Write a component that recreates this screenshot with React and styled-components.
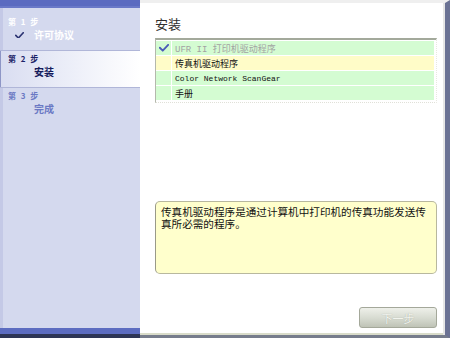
import React from "react";
import styled, { createGlobalStyle } from "styled-components";

const GlobalStyle = createGlobalStyle`
  html, body {
    margin: 0;
    padding: 0;
    background: #ffffff;
  }
  body {
    font-family: "Noto Sans CJK SC", "Liberation Sans", sans-serif;
  }
`;

const steps = [
  { label: "第 1 步", name: "许可协议", state: "done" },
  { label: "第 2 步", name: "安装", state: "active" },
  { label: "第 3 步", name: "完成", state: "todo" },
];

const items = [
  { text: "UFR II 打印机驱动程序", tone: "green", checked: true, disabled: true },
  { text: "传真机驱动程序", tone: "yellow" },
  { text: "Color Network ScanGear", tone: "green", latin: true },
  { text: "手册", tone: "green" },
];

const Check = ({ color, size = 9 }) => (
  <svg width={size} height={size * 0.75} viewBox="0 0 12 9">
    <path
      d="M1 4.5 L4.5 8 L11 1"
      fill="none"
      stroke={color}
      strokeWidth="2.2"
      strokeLinecap="round"
      strokeLinejoin="round"
    />
  </svg>
);

const App = () => {
  return (
    <>
      <GlobalStyle />
      <Frame>
        <Sidebar>
          <TopBand />
          <Steps>
            {steps.map((s) => (
              <Step key={s.label} $state={s.state}>
                <StepLabel $state={s.state}>{s.label}</StepLabel>
                <StepName $state={s.state}>
                  <CheckSlot>
                    {s.state === "done" && <Check color="#2b3372" size={9} />}
                  </CheckSlot>
                  {s.name}
                </StepName>
              </Step>
            ))}
          </Steps>
          <BottomBand />
        </Sidebar>

        <Main>
          <Title>安装</Title>
          <List>
            {items.map((it) => (
              <Row key={it.text} $tone={it.tone}>
                <IconCell>
                  {it.checked && <Check color="#4a5ab8" size={10} />}
                </IconCell>
                <TextCell $disabled={it.disabled} $latin={it.latin}>
                  {it.text}
                </TextCell>
              </Row>
            ))}
          </List>

          <Description>
            传真机驱动程序是通过计算机中打印机的传真功能发送传真所必需的程序。
          </Description>

          <Footer>
            <NextButton disabled>下一步</NextButton>
          </Footer>
        </Main>
      </Frame>
    </>
  );
};

const Frame = styled.div`
  display: flex;
  width: 450px;
  height: 338px;
  overflow: hidden;
`;

const Sidebar = styled.aside`
  width: 140px;
  display: flex;
  flex-direction: column;
  background: #d4d9ee;
`;

const TopBand = styled.div`
  height: 8px;
  background: #5b6bc0;
  box-shadow: inset 0 -2px 0 #6a79c8;
`;

const Steps = styled.div`
  flex: 1;
  padding-top: 6px;
  background: linear-gradient(to right, #c4c9e6 3px, #d4d9ee 3px);
`;

const Step = styled.div`
  height: 37px;
  padding: 3px 0 0 8px;
  box-sizing: border-box;
  border-bottom: 1px solid ${(p) => (p.$state === "todo" ? "transparent" : "#b0b6d8")};
  background: ${(p) =>
    p.$state === "active"
      ? "linear-gradient(to right, #d9ddf1 0%, #eef0f9 55%, #ffffff 100%)"
      : "transparent"};
  box-shadow: ${(p) => (p.$state === "active" ? "inset 1px 0 0 #8e96c6" : "none")};
`;

const StepLabel = styled.div`
  font-size: 8px;
  font-weight: 700;
  line-height: 10px;
  letter-spacing: 1.5px;
  color: ${(p) =>
    p.$state === "done" ? "#ffffff" : p.$state === "active" ? "#1c2468" : "#6b79c4"};
`;

const StepName = styled.div`
  display: flex;
  align-items: center;
  margin-top: 2px;
  font-size: 10px;
  font-weight: 700;
  line-height: 12px;
  color: ${(p) =>
    p.$state === "done" ? "#ffffff" : p.$state === "active" ? "#151c5c" : "#6b79c4"};
`;

const CheckSlot = styled.span`
  display: inline-flex;
  width: 26px;
  padding-left: 7px;
  box-sizing: border-box;
`;

const BottomBand = styled.div`
  height: 10px;
  background: linear-gradient(to bottom, #5c6cc0 0, #5c6cc0 6px, #2d3555 6px);
`;

const Main = styled.main`
  flex: 1;
  display: flex;
  flex-direction: column;
  padding: 13px 8px 0 15px;
  background: #ffffff;
  border-top: 3px solid #efefef;
  border-right: 5px solid #6b7294;
  border-bottom: 3px solid #767c8c;
  box-shadow: inset -2px 0 0 #e6e6e6, inset 0 -2px 0 #d9dcca;
`;

const Title = styled.h1`
  margin: 0;
  font-size: 13px;
  font-weight: 400;
  line-height: 16px;
  color: #2e2e2e;
`;

const List = styled.div`
  margin-top: 6px;
  display: flex;
  flex-direction: column;
  gap: 1px;
  padding: 1px 2px 2px 0;
  border-top: 2px solid #a3a99b;
  border-left: 1px solid #b4b8ac;
  border-bottom: 1px dotted #e0e0d8;
  border-right: 1px dotted #e8e8e0;
`;

const Row = styled.div`
  display: flex;
  height: 14px;
  gap: 1px;
  & > * {
    background: ${(p) => (p.$tone === "yellow" ? "#fffcc8" : "#d4fcd2")};
  }
`;

const IconCell = styled.div`
  width: 15px;
  display: flex;
  align-items: center;
  justify-content: center;
`;

const TextCell = styled.div`
  flex: 1;
  padding-left: 3px;
  display: flex;
  align-items: center;
  font-family: "Liberation Mono", "Noto Sans CJK SC", monospace;
  font-size: ${(p) => (p.$latin ? "8px" : "9px")};
  color: ${(p) => (p.$disabled ? "#a2a2a2" : "#111111")};
  white-space: nowrap;
`;

const Description = styled.div`
  margin-top: 98px;
  height: 73px;
  box-sizing: border-box;
  padding: 4px 4px 4px 5px;
  background: #ffffcc;
  border: 1px solid #b8b89e;
  border-left-color: #9a9a88;
  border-radius: 5px;
  font-size: 10.6px;
  line-height: 12px;
  color: #111111;
`;

const Footer = styled.div`
  display: flex;
  justify-content: flex-end;
  margin-top: 33px;
`;

const NextButton = styled.button`
  width: 78px;
  height: 21px;
  padding: 0;
  border: 1px solid #a4a89a;
  border-radius: 3px;
  background: linear-gradient(to bottom, #eef0ea 0%, #d6dad0 55%, #bfc3b6 100%);
  font-family: "Noto Sans CJK SC", sans-serif;
  font-size: 11px;
  color: #f2f4ee;
  text-shadow: 0 0 1px #9ea298;
  cursor: default;
`;

export default App;
